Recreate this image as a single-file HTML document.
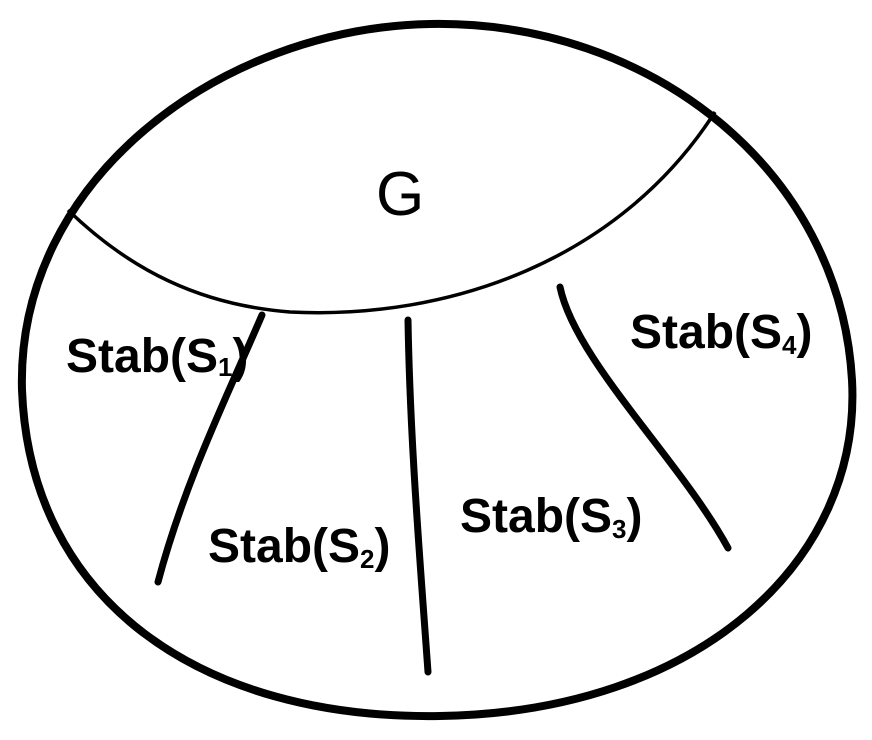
<!DOCTYPE html>
<html><head><style>html,body{margin:0;padding:0;background:#fff}svg{display:block}</style></head>
<body>
<svg width="872" height="740" viewBox="0 0 872 740" xmlns="http://www.w3.org/2000/svg">
<path d="M430,24 C650,20 840,170 852,380 C862,560 700,712 440,716 C200,720 30,600 22,390 C16,180 220,28 430,24 Z" fill="none" stroke="#000" stroke-width="8"/>
<path d="M68,210 C130,270 200,305 290,312 C450,320 620,260 715,112" fill="none" stroke="#000" stroke-width="3.5"/>
<path d="M262,315 C230,390 185,480 158,582" fill="none" stroke="#000" stroke-width="7" stroke-linecap="round"/>
<path d="M408,320 C410,440 420,560 428,672" fill="none" stroke="#000" stroke-width="7" stroke-linecap="round"/>
<path d="M560,287 C575,360 680,460 728,548" fill="none" stroke="#000" stroke-width="7" stroke-linecap="round"/>
<g font-family="Liberation Sans Narrow, Liberation Sans, sans-serif" fill="#000" font-weight="bold">
<text x="376" y="215" font-size="62" font-weight="normal">G</text>
<text x="66" y="372" font-size="48">Stab(S<tspan font-size="26" dy="4">1</tspan><tspan dy="-4">)</tspan></text>
<text x="208" y="562" font-size="48">Stab(S<tspan font-size="26" dy="6">2</tspan><tspan dy="-6">)</tspan></text>
<text x="460" y="532" font-size="48">Stab(S<tspan font-size="26" dy="6">3</tspan><tspan dy="-6">)</tspan></text>
<text x="630" y="348" font-size="48">Stab(S<tspan font-size="26" dy="6">4</tspan><tspan dy="-6">)</tspan></text>
</g>
</svg>
</body></html>
